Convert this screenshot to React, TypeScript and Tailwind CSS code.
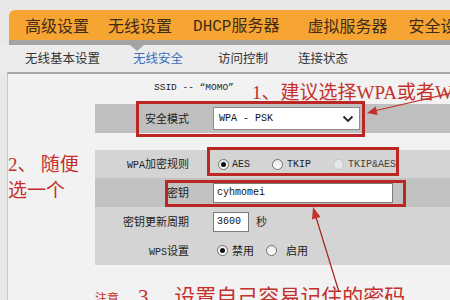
import React from "react";

const mono = "font-['Liberation_Mono','Noto_Sans_CJK_SC',monospace]";

function Radio({ checked, disabled }: { checked?: boolean; disabled?: boolean }) {
  return (
    <span
      className={
        "flex items-center justify-center w-[11px] h-[11px] rounded-full border " +
        (disabled
          ? "border-[#c4c4c4] bg-[#e6e6e6]"
          : "border-[#707070] bg-gradient-to-b from-[#e9e9e9] to-white")
      }
    >
      {checked && <span className="block w-[5px] h-[5px] rounded-full bg-[#111]" />}
    </span>
  );
}

export default function App() {
  return (
    <div className="relative w-[450px] h-[300px] overflow-hidden bg-[#e8e8e8] font-['Noto_Sans_CJK_SC',sans-serif]">
      <div className="h-[10px]" />
      {/* top nav */}
      <div className="ml-[9px] h-[30px] bg-[#f6a532] rounded-tl-[6px] flex items-center text-[16px] text-[#3f2c18] whitespace-nowrap overflow-hidden">
        <span className="ml-[16px]">高级设置</span>
        <span className="ml-[19px]">无线设置</span>
        <span className="ml-[21px]">
          <span className={mono}>DHCP</span>服务器
        </span>
        <span className="ml-[28px]">虚拟服务器</span>
        <span className="ml-[21px]">安全设置</span>
      </div>
      <div className="relative ml-[9px] h-[5px] bg-[#a4a4a4]">
        <div className="absolute left-[121px] top-[5px] w-0 h-0 border-l-[7px] border-r-[7px] border-t-[6px] border-l-transparent border-r-transparent border-t-[#a4a4a4]" />
      </div>
      {/* sub tabs */}
      <div className="h-[27px] flex items-center text-[12.5px] text-[#333] whitespace-nowrap bg-[#ececec]">
        <span className="ml-[25px]">无线基本设置</span>
        <span className="ml-[33px] text-[#3a6cc0]">无线安全</span>
        <span className="ml-[35px]">访问控制</span>
        <span className="ml-[30px]">连接状态</span>
      </div>
      {/* content */}
      <div className="ml-[7px] h-[230px] border-t-2 border-l border-t-[#a8a8a8] border-l-[#c8c8c8] bg-[#f2f2f2]">
        <div className={"h-[28px] flex items-center pl-[146px] text-[9.5px] text-[#222] " + mono}>
          SSID -- “MOMO”
        </div>
        <div className="mt-[2px] ml-[87px] h-[29px] bg-[#bfbfbf] flex items-center">
          <div className="w-[94px] text-right text-[11px] text-[#222]">安全模式</div>
          <div className="ml-[24px] w-[147px] h-[23px] bg-white border border-[#8c8c8c] flex items-center justify-between pl-[5px] pr-[5px]">
            <span className={"text-[10px] text-[#111] " + mono}>WPA - PSK</span>
            <svg width="12" height="8" viewBox="0 0 12 8">
              <path d="M1.5 1.5 L6 6 L10.5 1.5" fill="none" stroke="#222" strokeWidth="1.8" />
            </svg>
          </div>
        </div>
        <div className="mt-[17px] ml-[87px] h-[28px] bg-[#d4d4d4] flex items-center">
          <div className="w-[94px] text-right text-[11px] text-[#222]">
            <span className={"text-[10px] " + mono}>WPA</span>加密规则
          </div>
          <div className={"ml-[29px] flex items-center text-[10px] text-[#222] " + mono}>
            <Radio checked />
            <span className="ml-[3px]">AES</span>
            <span className="ml-[22px]">
              <Radio />
            </span>
            <span className="ml-[4px]">TKIP</span>
            <span className="ml-[22px]">
              <Radio disabled />
            </span>
            <span className="ml-[4px] text-[#444]">TKIP&amp;AES</span>
          </div>
        </div>
        <div className="ml-[87px] h-[29px] bg-[#c2c2c2] flex items-center">
          <div className="w-[94px] text-right text-[11px] text-[#222]">密钥</div>
          <div className="ml-[24px] w-[180px] h-[20px] bg-white border border-[#7a7a7a] flex items-center pl-[3px]">
            <span className={"text-[10px] text-[#111] " + mono}>cyhmomei</span>
          </div>
        </div>
        <div className="ml-[87px] h-[29px] bg-[#d4d4d4] flex items-center">
          <div className="w-[94px] text-right text-[11px] text-[#222]">密钥更新周期</div>
          <div className="ml-[24px] w-[36px] h-[20px] bg-white border border-[#7a7a7a] flex items-center pl-[3px]">
            <span className={"text-[10px] text-[#111] " + mono}>3600</span>
          </div>
          <span className="ml-[7px] text-[11px] text-[#222]">秒</span>
        </div>
        <div className="ml-[87px] h-[29px] bg-[#d4d4d4] flex items-center">
          <div className="w-[94px] text-right text-[11px] text-[#222]">
            <span className={"text-[10px] " + mono}>WPS</span>设置
          </div>
          <div className="ml-[28px] flex items-center text-[11px] text-[#222]">
            <Radio checked />
            <span className="ml-[4px]">禁用</span>
            <span className="ml-[12px]">
              <Radio />
            </span>
            <span className="ml-[9px]">启用</span>
          </div>
        </div>
      </div>

      {/* red highlight boxes */}
      <div className="absolute left-[136px] top-[101px] w-[229px] h-[36px] border-[3px] border-[#bb2723]" />
      <div className="absolute left-[207px] top-[147px] w-[192px] h-[29px] border-[3px] border-[#bb2723]" />
      <div className="absolute left-[165px] top-[180px] w-[241px] h-[27px] border-[3px] border-[#bb2723]" />

      {/* annotations */}
      <div className="absolute left-[252px] top-[81px] text-[19px] leading-[20px] text-[#c4302c] whitespace-nowrap">
        <span className="font-['Liberation_Serif',serif]">1</span>、建议选择
        <span className="font-['Liberation_Serif',serif]">WPA</span>或者
        <span className="font-['Liberation_Serif',serif]">WPA2</span>
      </div>
      <div className="absolute left-[8px] top-[151px] text-[19px] leading-[24px] text-[#c4302c] whitespace-nowrap">
        <div>
          <span className="font-['Liberation_Serif',serif]">2</span>、 随便
        </div>
        <div>选一个</div>
      </div>
      <div className="absolute left-[95px] top-[291px] text-[12px] leading-[14px] text-[#c4302c] whitespace-nowrap">
        注意
      </div>
      <div className="absolute left-[138px] top-[284px] text-[21px] leading-[22px] text-[#c4302c] whitespace-nowrap">
        <span className="font-['Liberation_Serif',serif]">3</span>、 设置自己容易记住的密码
      </div>

      {/* arrows */}
      <svg className="absolute left-0 top-0 pointer-events-none" width="450" height="300" viewBox="0 0 450 300">
        <line x1="452" y1="93" x2="374" y2="111" stroke="#c4302c" strokeWidth="1.2" />
        <polygon points="367,113 377.6,115 375.8,106.5" fill="#c4302c" />
        <line x1="339" y1="292" x2="315" y2="214" stroke="#a8201c" strokeWidth="1.2" />
        <polygon points="313,207 320.5,217 312,219.5" fill="#c4302c" />
      </svg>
    </div>
  );
}
